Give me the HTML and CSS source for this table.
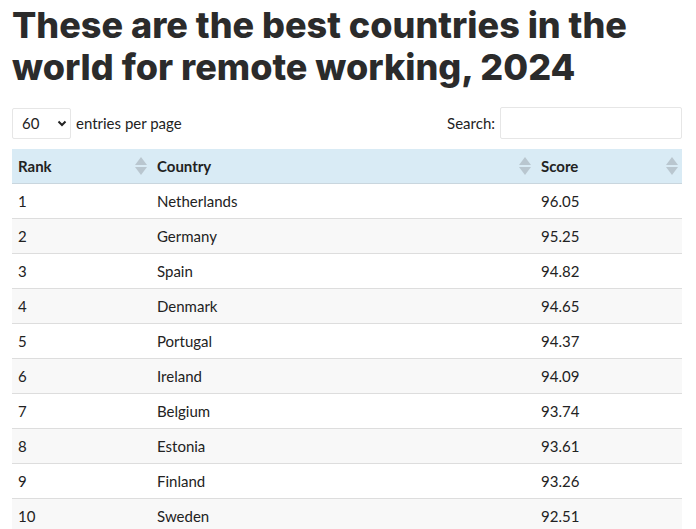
FILE: index.html
```html
<!DOCTYPE html>
<html>
<head>
<meta charset="utf-8">
<link rel="stylesheet" href="styles.css">
</head>
<body>
<div class="page">
  <h1 class="title">These are the best countries in the world for remote working, 2024</h1>
  <div class="controls">
    <div class="length">
      <div class="select"><span>60</span><svg width="10" height="7" viewBox="0 0 10 7"><path d="M1.5 1.5 L5 5 L8.5 1.5" fill="none" stroke="#222" stroke-width="2"/></svg></div>
      <span class="lbl">entries per page</span>
    </div>
    <div class="search">
      <span class="lbl">Search:</span>
      <div class="input"></div>
    </div>
  </div>
  <table class="tbl">
    <thead>
      <tr>
        <th class="c-rank">Rank<span class="sort"></span></th>
        <th class="c-country">Country<span class="sort"></span></th>
        <th class="c-score">Score<span class="sort"></span></th>
      </tr>
    </thead>
    <tbody>
      <tr><td>1</td><td>Netherlands</td><td>96.05</td></tr>
      <tr><td>2</td><td>Germany</td><td>95.25</td></tr>
      <tr><td>3</td><td>Spain</td><td>94.82</td></tr>
      <tr><td>4</td><td>Denmark</td><td>94.65</td></tr>
      <tr><td>5</td><td>Portugal</td><td>94.37</td></tr>
      <tr><td>6</td><td>Ireland</td><td>94.09</td></tr>
      <tr><td>7</td><td>Belgium</td><td>93.74</td></tr>
      <tr><td>8</td><td>Estonia</td><td>93.61</td></tr>
      <tr><td>9</td><td>Finland</td><td>93.26</td></tr>
      <tr><td>10</td><td>Sweden</td><td>92.51</td></tr>
    </tbody>
  </table>
</div>
</body>
</html>
```
FILE: styles.css
```css
html, body { margin: 0; padding: 0; background: #fff; }
body { font-family: Lato, "Open Sans", sans-serif; color: #222; overflow: hidden; }
.page { padding: 0 14px 0 12px; }
.title {
  font-family: Inter, "Open Sans", sans-serif;
  font-weight: 800;
  font-size: 36px;
  line-height: 42px;
  letter-spacing: 0;
  color: #2b2b2b;
  margin: 4px 0 0 0;
  width: 640px;
}
.controls {
  display: flex;
  justify-content: space-between;
  align-items: center;
  margin-top: 19px;
  font-size: 15px;
}
.length, .search { display: flex; align-items: center; }
.select {
  width: 59px; height: 31px; box-sizing: border-box;
  border: 1px solid #e6e6e6; border-radius: 2px;
  display: flex; align-items: center; justify-content: space-between;
  padding: 0 3px 0 9px; font-size: 15px;
}
.length .lbl { margin-left: 5px; }
.search .lbl { margin-right: 5px; }
.input { width: 182px; height: 32px; box-sizing: border-box; border: 1px solid #e6e6e6; border-radius: 2px; }
.tbl {
  width: 670px;
  border-collapse: collapse;
  margin-top: 10px;
  font-size: 15px;
  table-layout: fixed;
}
.tbl th {
  background: #d9ebf5;
  text-align: left;
  font-weight: 700;
  height: 34px;
  padding: 0 6px;
  position: relative;
  border-bottom: 1px solid #c9d6de;
  box-sizing: border-box;
}
.c-rank { width: 139px; }
.c-country { width: 384px; }
.tbl td {
  height: 35px;
  padding: 0 6px;
  border-bottom: 1px solid #ddd;
  box-sizing: border-box;
}
.tbl tbody tr:nth-child(even) td { background: #f8f8f8; }
.sort { position: absolute; right: 4px; top: 8px; width: 12px; height: 20px; }
.sort::before, .sort::after {
  content: ""; position: absolute; left: 0;
  border-left: 6px solid transparent; border-right: 6px solid transparent;
}
.sort::before { top: 0; border-bottom: 8px solid #b9c6cf; }
.sort::after { top: 10px; border-top: 8px solid #b9c6cf; }
```
